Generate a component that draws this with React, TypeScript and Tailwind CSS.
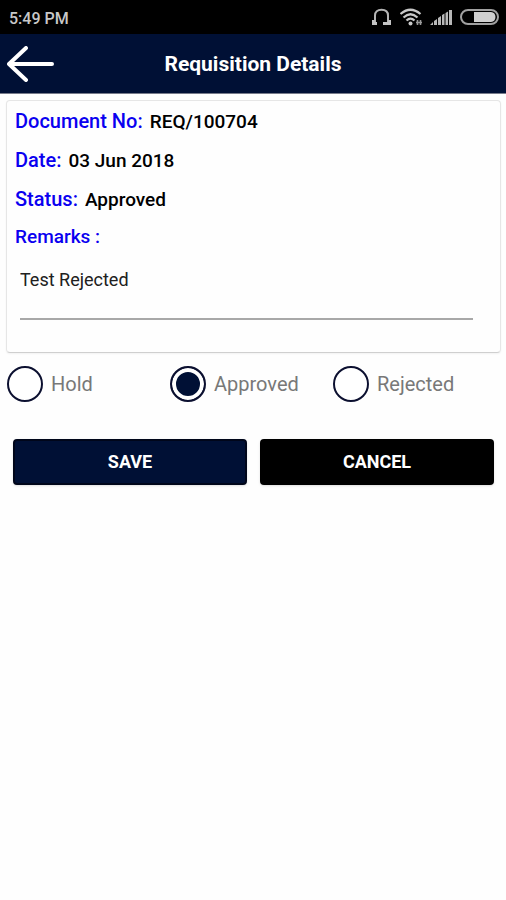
import { useState } from "react";

const details = [
  { label: "Document No:", value: "REQ/100704" },
  { label: "Date:", value: "03 Jun 2018" },
  { label: "Status:", value: "Approved" },
];

const options = ["Hold", "Approved", "Rejected"];

function StatusBar() {
  return (
    <div className="flex h-[34px] items-center justify-between bg-black pr-[7px] pl-[9px] text-[#c8c8c8]">
      <span className="pt-1 text-base font-medium">5:49 PM</span>
      <div className="flex items-center gap-2">
        <svg width="20" height="18" viewBox="0 0 20 18" fill="none" stroke="#b4b4b4" strokeWidth="2" aria-label="Headset">
          <path d="M3 14V7.500C3 3.500 5.500 1.800 9.500 1.800S16 3.500 16 7.500V14" />
          <path d="M0 12H2.500V14H5V17H0ZM19 12H16.500V14H11V17H19Z" fill="#c4c4c4" stroke="none" />
        </svg>
        <svg width="22" height="18" viewBox="0 0 22 18" fill="none" stroke="#c8c8c8" strokeWidth="2.200" aria-label="Wi-Fi">
          <path d="M0.500 6Q10.500 -2.500 20.500 6M3.500 9.500Q10.500 3 17.500 9.500M6.500 12.500Q10.500 8.500 14.500 12.500" />
          <circle cx="10.500" cy="15.500" r="2" fill="#c8c8c8" stroke="none" />
          <path d="M17.500 12V17M20.500 12V17M16 14.500H22" strokeWidth="1.600" stroke="#999" />
        </svg>
        <svg width="22" height="16" viewBox="0 0 22 16" fill="#b8b8b8" aria-label="Signal">
          <path d="M0 16L3 13V16ZM4 16V12L7 10V16ZM8 16V9L11 7V16ZM12 16V6L14.500 4.500V16ZM15.500 16V4L18 2.500V16ZM19 16V1H22V16Z" />
        </svg>
        <svg width="39" height="16" viewBox="0 0 39 16" fill="none" aria-label="Battery">
          <rect x="1" y="1" width="37" height="14" rx="7" stroke="#a0a0a0" strokeWidth="2" />
          <path d="M14 3H31C37 3 37 13 31 13H14Z" fill="#d0d0d0" />
        </svg>
      </div>
    </div>
  );
}

export default function App() {
  const [status, setStatus] = useState("Approved");
  const [remarks, setRemarks] = useState("Test Rejected");

  return (
    <div className="min-h-screen bg-[#fefefe] font-[Roboto,sans-serif]">
      <StatusBar />
      <header className="grid h-[60px] grid-cols-[1fr_auto_1fr] items-center border-b border-[#777b8a] bg-[#001035] px-[7px] text-white">
        <button type="button" aria-label="Back" className="justify-self-start">
          <svg width="48" height="36" viewBox="0 0 48 36" fill="none" stroke="currentColor" strokeWidth="4" strokeLinecap="round" strokeLinejoin="round">
            <path d="M45 18H2M19 2L2 18L19 34" />
          </svg>
        </button>
        <h1 className="pt-0.5 text-[21px] font-bold">Requisition Details</h1>
      </header>

      <main>
        <section className="mr-[5px] ml-[6px] mt-[6px] rounded border border-[#e6e6e6] border-b-[#cfcfcf] px-2 pb-[32px] shadow-xs">
          <dl>
            {details.map((item) => (
              <div key={item.label} className="flex h-[39px] items-baseline gap-[7px] pt-[3px] font-medium">
                <dt className="text-xl leading-[34px] text-[#0a00f0]">{item.label}</dt>
                <dd className="text-[19px] leading-[34px] text-black">{item.value}</dd>
              </div>
            ))}
          </dl>
          <label htmlFor="remarks" className="flex h-[38px] items-center text-[19px] font-medium text-[#0a00f0]">
            Remarks :
          </label>
          <div className="mr-[19px] ml-[5px] border-b-2 border-[#a8a8a8] pb-4">
            <input
              id="remarks"
              value={remarks}
              onChange={(e) => setRemarks(e.target.value)}
              className="block h-[46px] w-full text-lg text-[#202020] outline-none"
            />
          </div>
        </section>

        <fieldset aria-label="Status" className="mt-[13px] grid grid-cols-3 pr-[10px] pl-[7px]">
          {options.map((option) => (
            <label key={option} className="flex items-center gap-2 text-xl text-[#787878]">
              <input
                type="radio"
                name="status"
                checked={status === option}
                onChange={() => setStatus(option)}
                className="size-[36px] shrink-0 appearance-none rounded-full border-2 border-[#0c1030] bg-white checked:bg-[#001035] checked:shadow-[inset_0_0_0_4px_white]"
              />
              {option}
            </label>
          ))}
        </fieldset>

        <div className="mt-[37px] grid grid-cols-2 gap-[13px] pr-[12px] pl-[13px] text-lg font-bold text-white">
          <button type="button" className="h-[46px] rounded-sm border-2 border-[#00061a] bg-[#001035] shadow-sm">
            SAVE
          </button>
          <button type="button" className="h-[46px] rounded-sm bg-black shadow-sm">
            CANCEL
          </button>
        </div>
      </main>
    </div>
  );
}
